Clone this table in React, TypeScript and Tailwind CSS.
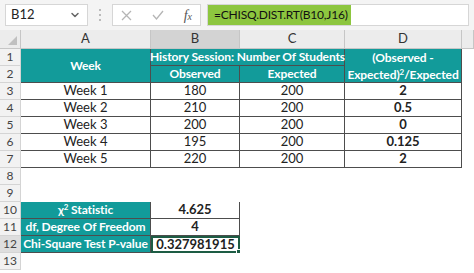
import { ChevronDown } from 'lucide-react';

const TEAL = 'bg-[#129b9a] text-white font-bold text-[12px] tracking-[-0.1px]';
const LINE = 'border-[#4d4d4d]';

const weeks = [
  { week: 'Week 1', obs: '180', exp: '200', chi: '2', row: 'row-start-4' },
  { week: 'Week 2', obs: '210', exp: '200', chi: '0.5', row: 'row-start-5' },
  { week: 'Week 3', obs: '200', exp: '200', chi: '0', row: 'row-start-6' },
  { week: 'Week 4', obs: '195', exp: '200', chi: '0.125', row: 'row-start-7' },
  { week: 'Week 5', obs: '220', exp: '200', chi: '2', row: 'row-start-8' },
];

function FormulaBar() {
  return (
    <div className="flex h-[30px] items-center gap-[6px] bg-[#f4f4f4] px-[5px] text-[13px] text-[#222]">
      <div className="flex h-[22px] w-[83px] items-center justify-between border border-[#d6d6d6] bg-white pl-[5px] pr-[6px]">
        <span>B12</span>
        <ChevronDown className="h-3 w-3 text-[#666]" strokeWidth={3} />
      </div>
      <div className="flex w-[12px] flex-col items-center gap-[3px]">
        <span className="h-[2px] w-[2px] bg-[#bbb]" />
        <span className="h-[2px] w-[2px] bg-[#bbb]" />
        <span className="h-[2px] w-[2px] bg-[#bbb]" />
      </div>
      <div className="flex h-[22px] w-[89px] items-center justify-between border border-[#d6d6d6] bg-white px-[8px] text-[#b5b5b5]">
        <svg width="11" height="11" viewBox="0 0 11 11" stroke="currentColor" strokeWidth="1.3">
          <path d="M1 1l9 9M10 1l-9 9" />
        </svg>
        <svg width="12" height="10" viewBox="0 0 12 10" stroke="currentColor" strokeWidth="1.3" fill="none">
          <path d="M1 5l3.5 4L11 1" />
        </svg>
        <span className="font-['Liberation_Serif',serif] text-[14px] italic text-[#555]">
          f<span className="text-[10px]">x</span>
        </span>
      </div>
      <div className="flex h-[22px] flex-1 border border-[#d6d6d6] bg-white">
        <div className="flex w-[143px] items-center whitespace-nowrap bg-[#8dc63f] pl-[6px] text-[12px] tracking-[-0.2px] text-[#111]">
          =CHISQ.DIST.RT(B10,J16)
        </div>
      </div>
    </div>
  );
}

function Cell({ className = '', children }: { className?: string; children?: React.ReactNode }) {
  return <div className={`flex items-center justify-center whitespace-nowrap ${className}`}>{children}</div>;
}

export default function App() {
  const colHeads = ['A', 'B', 'C', 'D', ''];
  return (
    <div className="h-[273px] w-[474px] overflow-hidden bg-white font-['Lato',sans-serif]">
      <FormulaBar />
      <div className="grid grid-cols-[21px_130px_89px_105px_117px_1fr] grid-rows-[19px_repeat(13,17px)] text-[13px] text-[#222]">
        {/* column headers */}
        <div className="relative col-start-1 row-start-1 border-r border-b border-[#c6c6c6] bg-[#ececec]">
          <span className="absolute bottom-[3px] right-[3px] h-0 w-0 border-b-[9px] border-l-[9px] border-b-[#c0c0c0] border-l-transparent" />
        </div>
        {colHeads.map((c, i) => (
          <Cell
            key={i}
            className={`row-start-1 border-r border-b border-[#c6c6c6] text-[#333] ${c === 'B' ? 'bg-[#d3d3d3]' : 'bg-[#ececec]'}`}
          >
            {c}
          </Cell>
        ))}

        {/* row numbers */}
        {Array.from({ length: 13 }, (_, i) => (
          <Cell
            key={i}
            className={`col-start-1 border-r border-b border-[#d4d4d4] text-[12px] text-[#444] ${i === 11 ? 'bg-[#dedede]' : 'bg-[#f2f2f2]'}`}
          >
            {i + 1}
          </Cell>
        ))}

        {/* header block */}
        <Cell className={`col-start-2 row-start-2 row-span-2 border-r border-b ${LINE} ${TEAL}`}>Week</Cell>
        <Cell className={`col-start-3 col-span-2 row-start-2 border-r border-b ${LINE} ${TEAL}`}>
          History Session: Number Of Students
        </Cell>
        <Cell className={`col-start-5 row-start-2 row-span-2 flex-col border-r border-b ${LINE} ${TEAL} leading-[17px]`}>
          <span>(Observed -</span>
          <span>
            Expected)<sup className="text-[8px]">2</sup>/Expected
          </span>
        </Cell>
        <Cell className={`col-start-3 row-start-3 border-r border-b ${LINE} ${TEAL}`}>Observed</Cell>
        <Cell className={`col-start-4 row-start-3 border-r border-b ${LINE} ${TEAL}`}>Expected</Cell>

        {/* data rows */}
        {weeks.map((w) => (
          <div key={w.week} className="contents">
            <Cell className={`col-start-2 ${w.row} border-r border-b ${LINE}`}>{w.week}</Cell>
            <Cell className={`col-start-3 ${w.row} border-r border-b ${LINE}`}>{w.obs}</Cell>
            <Cell className={`col-start-4 ${w.row} border-r border-b ${LINE}`}>{w.exp}</Cell>
            <Cell className={`col-start-5 ${w.row} border-r border-b ${LINE} font-bold`}>{w.chi}</Cell>
          </div>
        ))}

        {/* summary */}
        <Cell className={`col-start-2 row-start-11 border-r border-b ${LINE} ${TEAL}`}>
          <span>
            χ<sup className="text-[8px]">2</sup> Statistic
          </span>
        </Cell>
        <Cell className={`col-start-3 row-start-11 border-r border-b ${LINE} font-bold`}>4.625</Cell>
        <Cell className={`col-start-2 row-start-12 border-r border-b ${LINE} ${TEAL}`}>df, Degree Of Freedom</Cell>
        <Cell className={`col-start-3 row-start-12 border-r border-b ${LINE} font-bold`}>4</Cell>
        <Cell className={`col-start-2 row-start-13 border-r border-b ${LINE} ${TEAL}`}>Chi-Square Test P-value</Cell>
        <Cell className="relative col-start-3 row-start-13 border-2 border-[#1d5c44] font-bold">
          0.327981915
          <span className="absolute -bottom-[3px] -right-[3px] h-[5px] w-[5px] border border-white bg-[#1d5c44]" />
        </Cell>
      </div>
    </div>
  );
}
